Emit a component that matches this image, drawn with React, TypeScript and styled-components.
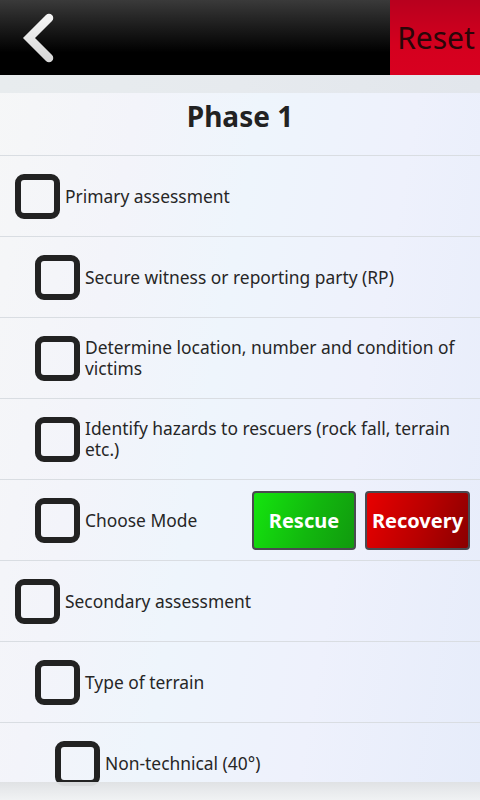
import React from "react";
import styled, { createGlobalStyle } from "styled-components";

const Global = createGlobalStyle`
  html, body { margin: 0; padding: 0; }
  body { font-family: "Noto Sans", "Open Sans", sans-serif; }
`;

const Screen = styled.div`
  position: relative;
  width: 480px;
  height: 800px;
  overflow: hidden;
  display: flex;
  flex-direction: column;
  background: linear-gradient(100deg, #f6f7f7 0%, #f3f4fa 25%, #eef5fc 45%, #eef1fc 70%, #e6ecfa 100%);
`;

const TopBar = styled.div`
  height: 75px;
  flex: none;
  display: flex;
  align-items: stretch;
  background: linear-gradient(#3a3a3a 0%, #1c1c1c 35%, #000 70%, #000 100%);
`;

const BackButton = styled.button`
  width: 75px;
  border: none;
  background: transparent;
  padding: 0;
  display: flex;
  align-items: center;
  justify-content: center;
`;

const Spacer = styled.div`
  flex: 1;
`;

const ResetButton = styled.button`
  width: 90px;
  border: none;
  padding: 0 0 0 2px;
  background: linear-gradient(#b8001e 0%, #d4001e 60%, #d80020 100%);
  color: #2a0608;
  font-family: "Noto Sans", "Open Sans", sans-serif;
  font-size: 30px;
  font-weight: 400;
`;

const ShadowStrip = styled.div`
  height: 18px;
  flex: none;
  background: linear-gradient(90deg, #e8ecee, #e6eaee 50%, #e2e6ec);
`;

const Title = styled.h1`
  margin: 0;
  height: 63px;
  flex: none;
  display: flex;
  align-items: center;
  justify-content: center;
  font-size: 28px;
  font-weight: 700;
  color: #222;
  border-bottom: 1px solid #d9dde2;
  box-sizing: border-box;
  padding-bottom: 16px;
`;

const List = styled.div`
  display: flex;
  flex-direction: column;
`;

const Row = styled.div<{ $level: number }>`
  height: 81px;
  flex: none;
  box-sizing: border-box;
  border-bottom: 1px solid #d9dde2;
  display: flex;
  align-items: center;
  padding-left: ${(p) => 15 + p.$level * 20}px;
  padding-right: 10px;
`;

const Box = styled.div`
  width: 45px;
  height: 45px;
  flex: none;
  box-sizing: border-box;
  border: 6px solid #222;
  border-radius: 9px;
  background: transparent;
  margin-right: 5px;
`;

const Label = styled.span`
  flex: 1;
  font-size: 17.4px;
  line-height: 21px;
  color: #262626;
`;

const ModeButton = styled.button<{ $kind: "rescue" | "recovery" }>`
  height: 59px;
  width: ${(p) => (p.$kind === "rescue" ? 104 : 105)}px;
  margin-left: ${(p) => (p.$kind === "rescue" ? 0 : 9)}px;
  box-sizing: border-box;
  border: 2px solid #4a4a50;
  border-radius: 4px;
  color: #fff;
  font-family: "Noto Sans", "Open Sans", sans-serif;
  font-weight: 700;
  font-size: 20px;
  padding: 0;
  background: ${(p) =>
    p.$kind === "rescue"
      ? "linear-gradient(110deg, #14e50e 0%, #12b80e 55%, #119a0e 100%)"
      : "linear-gradient(110deg, #e80000 0%, #b80000 55%, #8a0000 100%)"};
`;

const BottomStrip = styled.div`
  position: absolute;
  left: 0;
  right: 0;
  bottom: 0;
  height: 18px;
  background: linear-gradient(#dfe1e3 0%, #e8eaec 50%, #f0f2f3 100%);
  opacity: 0.95;
`;

const Chevron = () => (
  <svg width="40" height="56" viewBox="0 0 40 56">
    <defs>
      <linearGradient id="chev" x1="0" y1="0" x2="0" y2="1">
        <stop offset="0" stopColor="#f4f4f4" />
        <stop offset="1" stopColor="#d8d8d8" />
      </linearGradient>
    </defs>
    <polyline
      points="31,8 11,28 31,48"
      fill="none"
      stroke="url(#chev)"
      strokeWidth="8.5"
      strokeLinecap="round"
      strokeLinejoin="miter"
    />
  </svg>
);

type Item = { level: number; text: string; mode?: boolean };

const items: Item[] = [
  { level: 0, text: "Primary assessment" },
  { level: 1, text: "Secure witness or reporting party (RP)" },
  { level: 1, text: "Determine location, number and condition of victims" },
  { level: 1, text: "Identify hazards to rescuers (rock fall, terrain etc.)" },
  { level: 1, text: "Choose Mode", mode: true },
  { level: 0, text: "Secondary assessment" },
  { level: 1, text: "Type of terrain" },
  { level: 2, text: "Non-technical (40°)" },
];

export default function App() {
  return (
    <>
      <Global />
      <Screen>
        <TopBar>
          <BackButton aria-label="Back">
            <Chevron />
          </BackButton>
          <Spacer />
          <ResetButton>Reset</ResetButton>
        </TopBar>
        <ShadowStrip />
        <Title>Phase 1</Title>
        <List>
          {items.map((it, i) => (
            <Row key={i} $level={it.level}>
              <Box />
              <Label>{it.text}</Label>
              {it.mode && (
                <>
                  <ModeButton $kind="rescue">Rescue</ModeButton>
                  <ModeButton $kind="recovery">Recovery</ModeButton>
                </>
              )}
            </Row>
          ))}
        </List>
        <BottomStrip />
      </Screen>
    </>
  );
}
